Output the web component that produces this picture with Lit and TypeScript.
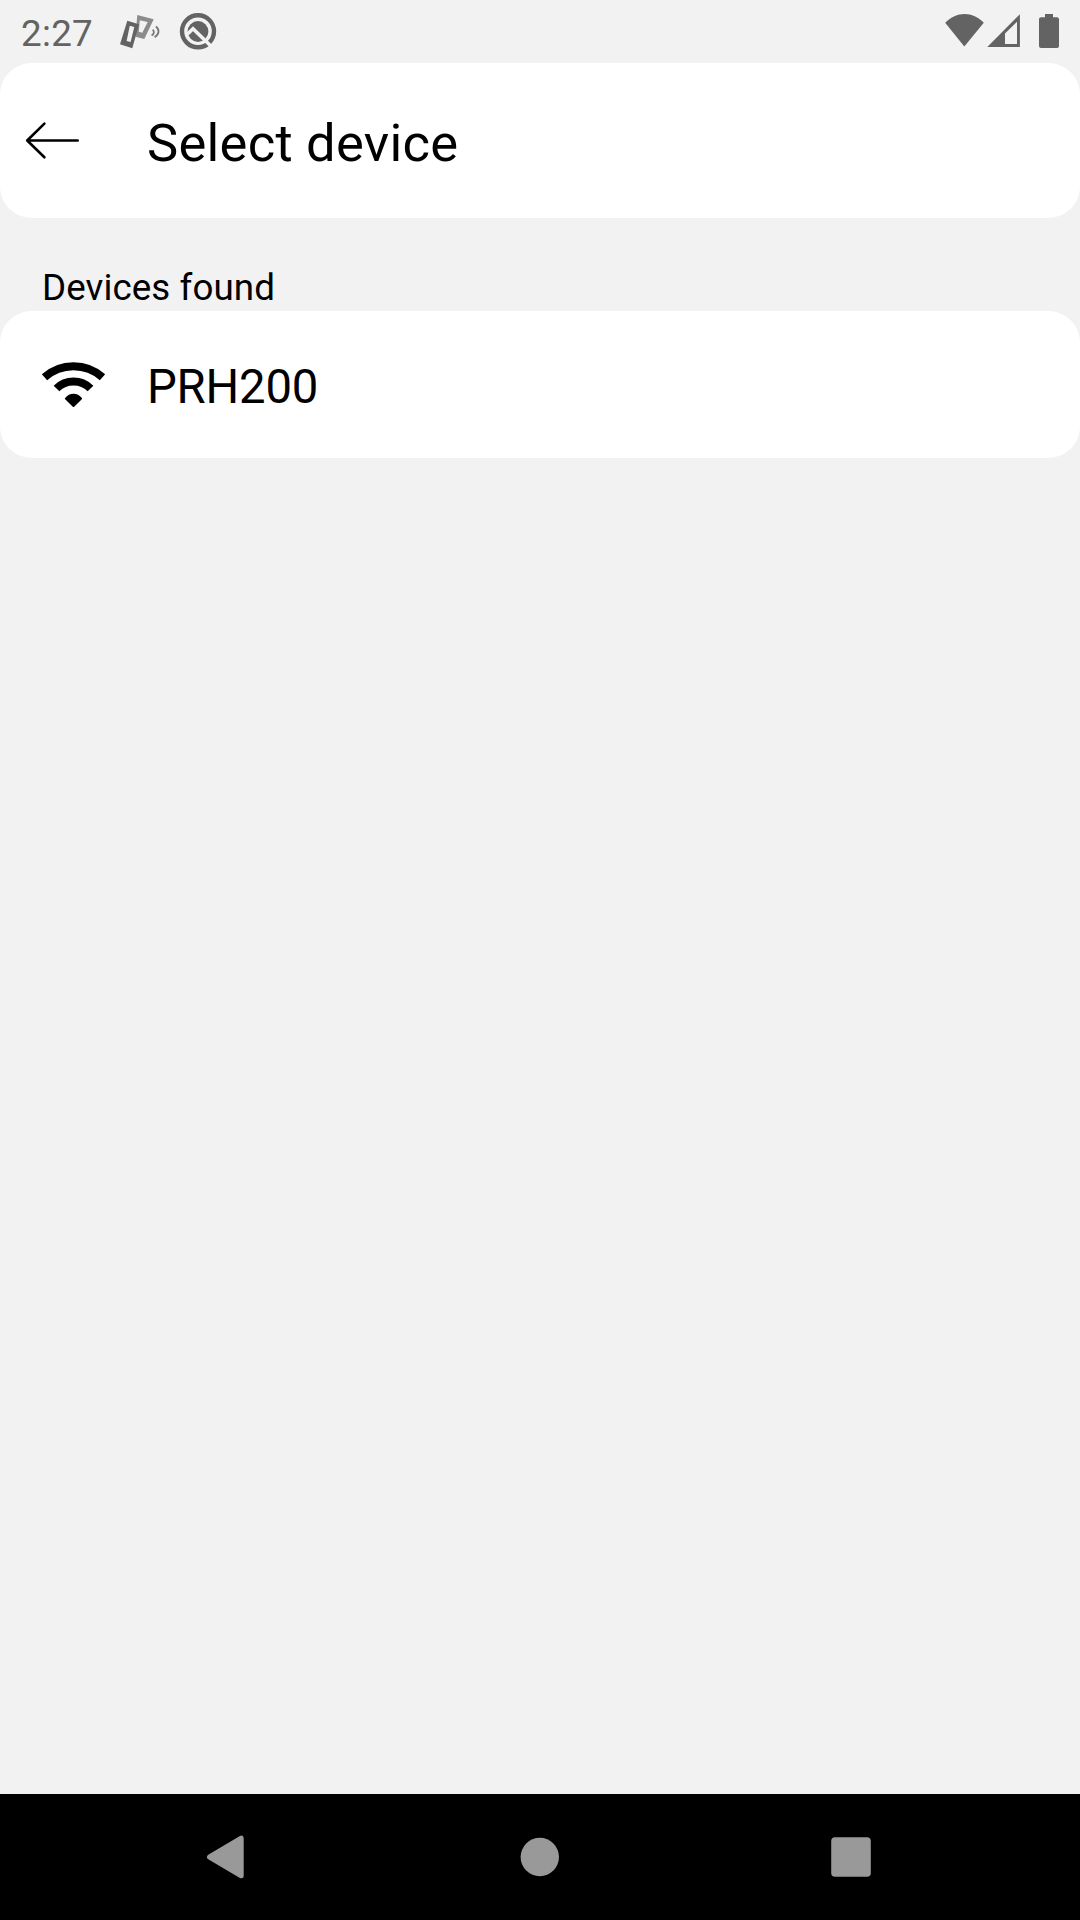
import { LitElement, html, css, svg } from "lit";
import { customElement, property } from "lit/decorators.js";

@customElement("status-bar")
class StatusBar extends LitElement {
  static styles = css`
    :host { display: flex; height: 63px; color: #636363; }
    .clock { width: 98px; padding: 4px 0 0 21px; box-sizing: border-box; font-size: 36.75px; line-height: 59px; letter-spacing: 0.3px; white-space: nowrap; }
    svg { display: block; flex: none; }
    .right { margin-left: auto; }
  `;
  render() {
    return html`
      <div class="clock">2:27</div>
      <svg width="130" height="63" viewBox="98 0 130 63" fill="none">
        <path fill-rule="evenodd" d="M137.3 15 153.7 19.3 144.3 39 135.5 36.7ZM139.8 20.2 138.8 31.7 142.3 32.7 147.7 21.9Z" fill="#8b8b8b" />
        <path fill-rule="evenodd" d="M127.3 20.7 139 24.3 132.3 48.3 120 44.3ZM129.8 25.8 126.6 40.9 130.6 41.9 134.3 26.9Z" fill="#636363" />
        <path d="M152.6 29.6C154.6 31.2 154.3 34 151.6 35.6M155.8 26.6C159.8 29.4 159.4 34.2 154.6 37.2" stroke="#777" stroke-width="1.8" />
        <circle cx="198" cy="31.3" r="16" stroke="#636363" stroke-width="4.4" />
        <circle cx="198" cy="31.5" r="10.4" fill="#636363" />
        <path d="M187 34.5 193 28.7 210.6 45.8" stroke="#f2f2f2" stroke-width="3.5" />
      </svg>
      <svg class="right" width="136" height="63" viewBox="944 0 136 63" fill="#636363">
        <path d="M964.3 46.6 945.2 22.8C956.3 11.1 972.8 11.1 983.8 22.8Z" />
        <path fill-rule="evenodd" d="M987.3 47 1019.9 14.2V47ZM1005 44H1017V21.8L1005 33.6Z" />
        <path d="M1045 14H1053V17.3H1057Q1059 17.3 1059 19.3V46Q1059 48 1057 48H1041Q1039 48 1039 46V19.3Q1039 17.3 1041 17.3H1045Z" />
      </svg>
    `;
  }
}

@customElement("page-header")
class PageHeader extends LitElement {
  @property() heading = "";
  static styles = css`
    :host { display: flex; height: 155px; box-sizing: border-box; background: #fff; border-radius: 31.5px; }
    svg { display: block; flex: none; }
    .title { margin: 0; padding-top: 5px; font-size: 52.5px; font-weight: 400; line-height: 150px; letter-spacing: 0.26px; white-space: nowrap; }
  `;
  render() {
    return html`
      <svg width="147" height="155" viewBox="0 63 147 155" fill="none" stroke="#000" stroke-width="2.6" stroke-linecap="round" stroke-linejoin="round">
        <path d="M44.4 123.6 27.2 140.5 44.4 157.3M27.2 140.5H77.7" />
      </svg>
      <h1 class="title">${this.heading}</h1>
    `;
  }
}

@customElement("device-row")
class DeviceRow extends LitElement {
  @property() name = "";
  static styles = css`
    :host { display: flex; height: 147px; background: #fff; border-radius: 31.5px; }
    svg { display: block; flex: none; }
    .name { padding-top: 5px; font-size: 47.25px; line-height: 142px; letter-spacing: -0.2px; white-space: nowrap; }
  `;
  render() {
    return html`
      <svg width="147" height="147" viewBox="0 311 147 147" fill="none" stroke="#000">
        <path d="M44.5 377.2C61 362.5 86 362.5 102.5 377.2" stroke-width="8" />
        <path d="M56.5 388.5C65.8 379.2 81.2 379.2 90.5 388.5" stroke-width="8" />
        <path d="M65.9 398.6C70 393.3 77 393.3 81.1 398.6L73.5 406Z" fill="#000" stroke-width="2" stroke-linejoin="round" />
      </svg>
      <div class="name">${this.name}</div>
    `;
  }
}

const navIcons = [
  { view: "74 1794 311 126", shape: svg`<path d="M209.5 1857 241.2 1838.2V1875.8Z" stroke="#999" stroke-width="5" stroke-linejoin="round" />` },
  { view: "385 1794 311 126", shape: svg`<circle cx="539.8" cy="1857" r="19.2" />` },
  { view: "696 1794 311 126", shape: svg`<rect x="831.2" y="1837.2" width="39.6" height="39.6" rx="3.8" />` },
];

@customElement("nav-bar")
class NavBar extends LitElement {
  static styles = css`
    :host { display: flex; height: 126px; padding-left: 74px; background: #000; }
    svg { display: block; flex: none; width: 311px; height: 126px; fill: #999; }
  `;
  render() {
    return navIcons.map(({ view, shape }) => html`<svg viewBox=${view}>${shape}</svg>`);
  }
}

@customElement("app-root")
class AppRoot extends LitElement {
  static styles = css`
    :host { display: flex; flex-direction: column; width: 1080px; height: 1920px; background: #f2f2f2; color: #000; font-family: Roboto, sans-serif; }
    .section { height: 93px; padding: 46px 0 0 42px; box-sizing: border-box; font-size: 36.75px; line-height: 48px; letter-spacing: 0.08px; }
    .content { flex: 1; }
  `;
  render() {
    return html`
      <status-bar></status-bar>
      <page-header heading="Select device"></page-header>
      <main class="content">
        <div class="section">Devices found</div>
        <device-row name="PRH200"></device-row>
      </main>
      <nav-bar></nav-bar>
    `;
  }
}
